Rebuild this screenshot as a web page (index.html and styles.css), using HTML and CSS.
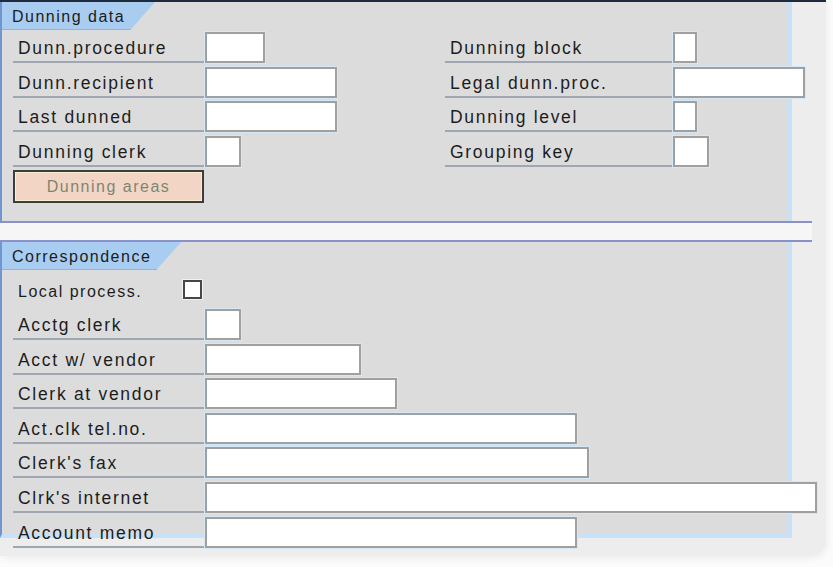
FILE: index.html
```html
<!DOCTYPE html>
<html lang="en">
  <head>
    <meta charset="UTF-8" />
    <meta name="viewport" content="width=device-width, initial-scale=1.0" />
    <title>Vendor - Correspondence</title>
    <link rel="stylesheet" href="styles.css">
  </head>
  <body>
    <div class="screen">
      <!-- Dunning data -->
      <section class="group group-dunning">
        <div class="group-tab">Dunning data</div>
        <div class="group-body two-cols">
          <div class="col">
            <div class="row"><span class="label">Dunn.procedure</span><input class="field w-60" type="text"></div>
            <div class="row"><span class="label">Dunn.recipient</span><input class="field w-132" type="text"></div>
            <div class="row"><span class="label">Last dunned</span><input class="field w-132" type="text"></div>
            <div class="row"><span class="label">Dunning clerk</span><input class="field w-36" type="text"></div>
            <button class="btn" type="button">Dunning areas</button>
          </div>
          <div class="col col-right">
            <div class="row"><span class="label">Dunning block</span><input class="field w-24" type="text"></div>
            <div class="row"><span class="label">Legal dunn.proc.</span><input class="field w-132" type="text"></div>
            <div class="row"><span class="label">Dunning level</span><input class="field w-24" type="text"></div>
            <div class="row"><span class="label">Grouping key</span><input class="field w-36" type="text"></div>
          </div>
        </div>
      </section>

      <div class="group-gap"></div>

      <!-- Correspondence -->
      <section class="group group-corr">
        <div class="group-tab">Correspondence</div>
        <div class="group-body">
          <div class="col">
            <div class="row"><span class="label label-plain">Local process.</span><input class="check" type="checkbox"></div>
            <div class="row"><span class="label">Acctg clerk</span><input class="field w-36" type="text"></div>
            <div class="row"><span class="label">Acct w/ vendor</span><input class="field w-156" type="text"></div>
            <div class="row"><span class="label">Clerk at vendor</span><input class="field w-192" type="text"></div>
            <div class="row"><span class="label">Act.clk tel.no.</span><input class="field w-372" type="text"></div>
            <div class="row"><span class="label">Clerk's fax</span><input class="field w-384" type="text"></div>
            <div class="row"><span class="label">Clrk's internet</span><input class="field w-612" type="text"></div>
            <div class="row"><span class="label">Account memo</span><input class="field w-372" type="text"></div>
          </div>
        </div>
      </section>
    </div>
  </body>
</html>
```

FILE: styles.css
```css
* {
  margin: 0;
  padding: 0;
  box-sizing: border-box;
}

body {
  width: 833px;
  height: 567px;
  overflow: hidden;
  background: #fbfbfb;
  font-family: "Liberation Sans", Arial, sans-serif;
  color: #1c1c1c;
}

.screen {
  width: 826px;
  height: 556px;
  background: #ededed;
  border-top: 2px solid #1e2b3c;
  border-radius: 0 0 16px 0;
  box-shadow: 2px 3px 6px rgba(0, 0, 0, 0.05);
}

.group {
  width: 792px;
  background: #dcdcdc;
  border-left: 2px solid #7096d2;
  border-right: 4px solid #c7e2f8;
}

.group-dunning {
  height: 219px;
}

.group-corr {
  height: 296px;
  border-bottom: 4px solid #c7e2f8;
}

.group-gap {
  width: 812px;
  height: 21px;
  background: #f6f6f6;
  border-top: 2px solid #8a90c8;
  border-bottom: 2px solid #8a90c8;
}

.group-tab {
  display: inline-block;
  height: 28px;
  padding: 4px 30px 0 10px;
  background: #a9cdf0;
  border-bottom: 1px solid #8db3e0;
  font-size: 16px;
  letter-spacing: 1.5px;
  line-height: 22px;
  clip-path: polygon(0 0, 100% 0, calc(100% - 25px) 100%, 0 100%);
}

.group-body {
  padding: 2px 0 0 11px;
}

.group-corr .group-body {
  padding-top: 4.5px;
}

.two-cols {
  display: grid;
  grid-template-columns: 432px auto;
}

.col {
  display: flex;
  flex-direction: column;
  gap: 3.6px;
}

.row {
  display: flex;
  height: 31px;
}

.label {
  flex: none;
  width: 192px;
  padding: 4px 0 0 5px;
  border-bottom: 2px solid #a1a7b2;
  font-size: 17.5px;
  letter-spacing: 1.7px;
  line-height: 25px;
  white-space: nowrap;
}

.col-right .label {
  width: 228px;
}

.label-plain {
  width: 170px;
  border-bottom: none;
  font-size: 16px;
  letter-spacing: 1.5px;
}

.field {
  flex: none;
  height: 31px;
  border: 2px solid #a0a0a0;
  background: #fff;
  box-shadow: 0 0 0 1px #d4e8f7;
}

.w-24 { width: 24px; }
.w-36 { width: 36px; }
.w-60 { width: 60px; }
.w-132 { width: 132px; }
.w-156 { width: 156px; }
.w-192 { width: 192px; }
.w-372 { width: 372px; }
.w-384 { width: 384px; }
.w-612 { width: 612px; }

.check {
  flex: none;
  appearance: none;
  width: 19px;
  height: 19px;
  margin-top: 5.5px;
  border: 2px solid #474747;
  background: #fff;
  box-shadow: 0 0 0 1px #eef3f8;
}

.btn {
  width: 191px;
  height: 33px;
  background: #f3d5c5;
  border: 2px solid #3d3d3d;
  box-shadow: inset 0 0 0 1px #f8f0cf;
  color: #7f8570;
  font-family: inherit;
  font-size: 16px;
  letter-spacing: 1.5px;
  cursor: pointer;
}
```
